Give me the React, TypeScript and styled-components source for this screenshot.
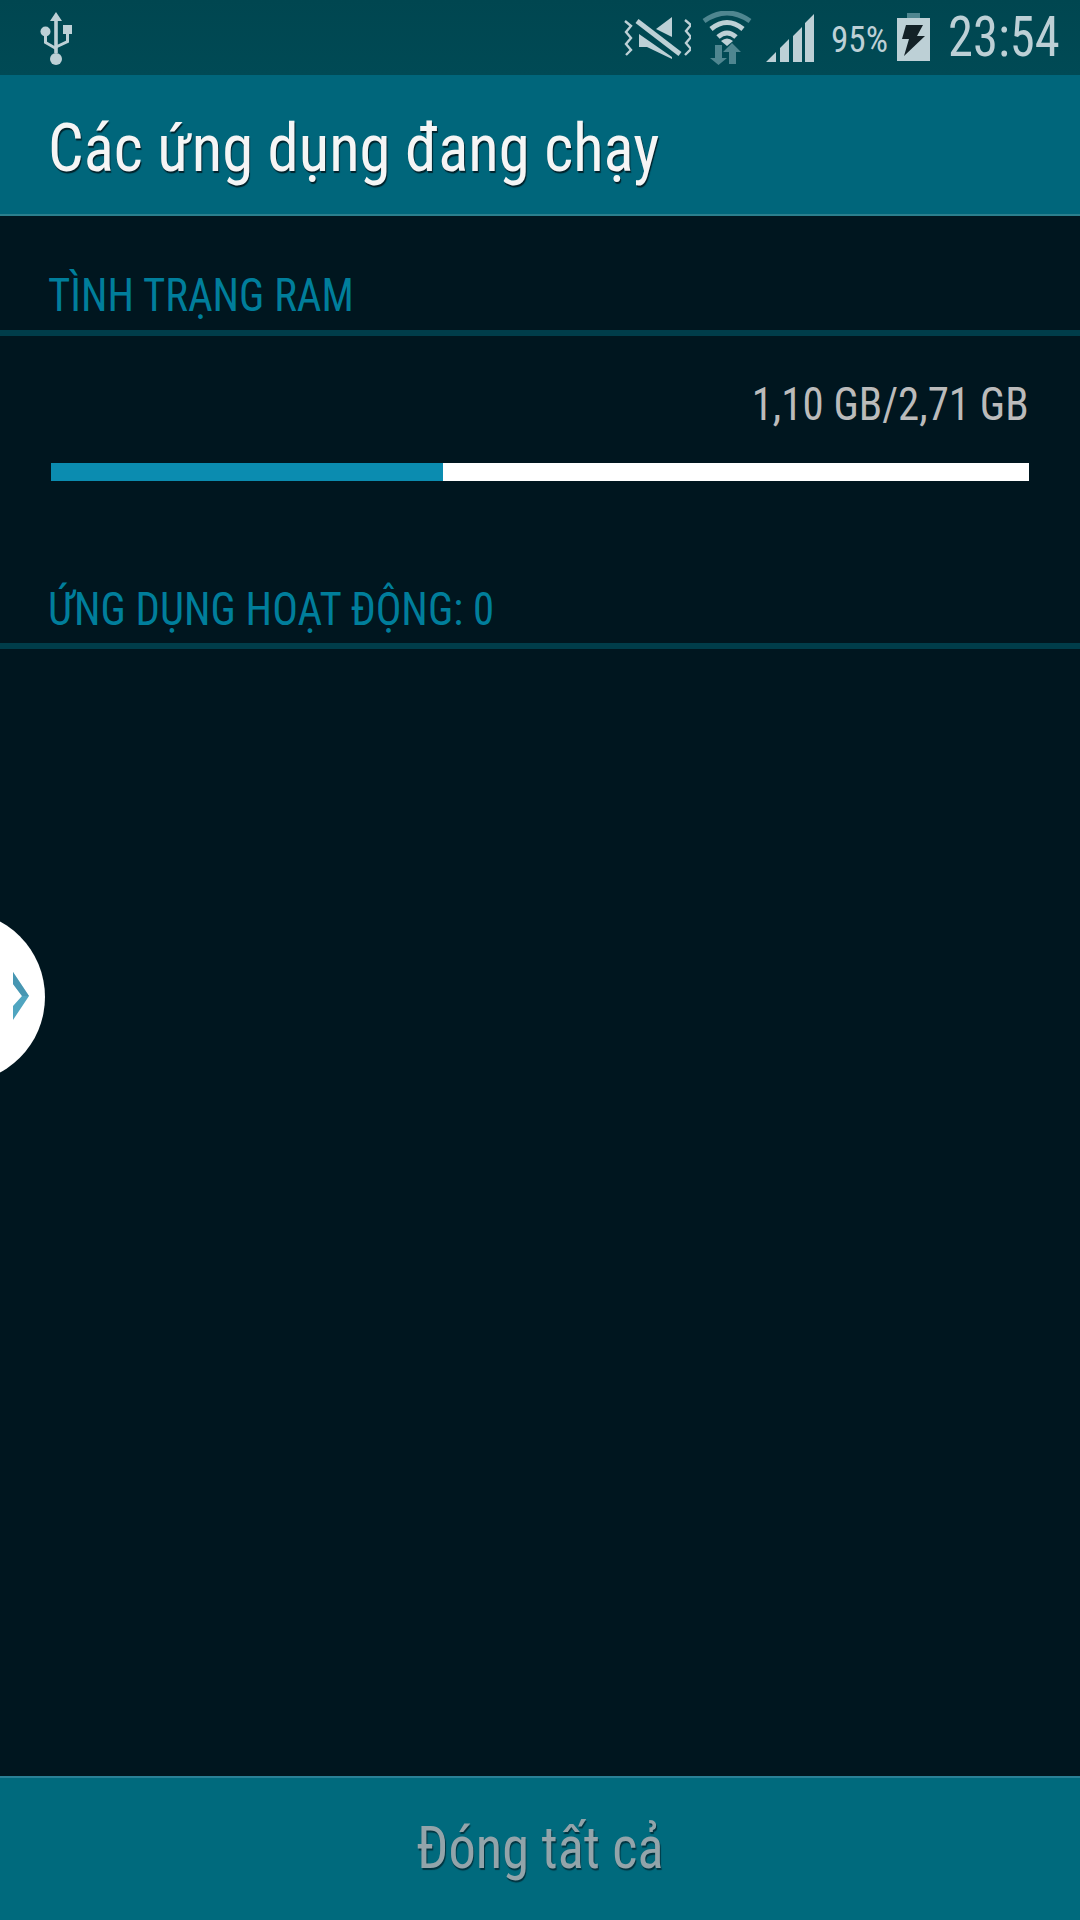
import React from "react";
import styled, { createGlobalStyle } from "styled-components";

const Global = createGlobalStyle`
  html, body { margin: 0; padding: 0; background: #00161f; }
  #root { width: 1080px; height: 1920px; }
  * { box-sizing: border-box; }
`;

const Page = styled.div`
  width: 1080px;
  height: 1920px;
  display: flex;
  flex-direction: column;
  position: relative;
  overflow: hidden;
  background: #00161f;
  font-family: Roboto, "Liberation Sans", sans-serif;
  font-stretch: 75%;
`;

const StatusBar = styled.div`
  height: 75px;
  flex: none;
  display: flex;
  align-items: flex-start;
  background: linear-gradient(#004650, #004a55);
  color: #bdd0d6;
`;

const StatusIcon = styled.svg<{ $left: number; $top: number }>`
  display: block;
  flex: none;
  margin-left: ${(p) => p.$left}px;
  margin-top: ${(p) => p.$top}px;
`;

const Spacer = styled.div`
  flex: 1;
`;

const Condensed = styled.span<{ $x: number }>`
  display: inline-block;
  white-space: nowrap;
  transform: scaleX(${(p) => p.$x});
  transform-origin: left center;
`;

const Battery = styled.div`
  flex: none;
  width: 54px;
  margin-left: 17px;
  font-size: 37px;
  line-height: 40px;
  margin-top: 20px;
`;

const Clock = styled.div`
  flex: none;
  width: 128px;
  margin-left: 18px;
  font-size: 55px;
  line-height: 60px;
  margin-top: 7px;
`;

const Header = styled.header`
  height: 141px;
  flex: none;
  background: #00667b;
  border-bottom: 2px solid #2b7f8d;
  padding: 6px 0 0 48px;
  display: flex;
  align-items: center;
  color: #f5f5f5;
  font-size: 67px;
  text-shadow: 1px 2px 1px #00222b;
`;

const Content = styled.main`
  flex: 1;
  display: flex;
  flex-direction: column;
`;

const SectionTitle = styled.h2<{ $top: number; $height: number }>`
  margin: ${(p) => p.$top}px 0 0;
  height: ${(p) => p.$height}px;
  padding: 0 0 0 48px;
  border-bottom: 6px solid #003d4a;
  color: #007e9b;
  font-size: 47px;
  font-weight: 400;
  line-height: 50px;
`;

const RamValue = styled.div`
  margin-top: 38px;
  height: 60px;
  padding-right: 51px;
  display: flex;
  justify-content: flex-end;
  color: #bbbbbb;
  font-size: 47px;
  line-height: 60px;
`;

const RightFit = styled(Condensed)`
  transform-origin: right center;
`;

const RamBar = styled.div`
  margin: 29px 51px 0;
  height: 18px;
  background: #ffffff;
  display: flex;
`;

const RamUsed = styled.div`
  background: #0b8cb0;
  height: 100%;
`;

const Handle = styled.div`
  position: absolute;
  left: -127px;
  top: 911px;
  width: 172px;
  height: 172px;
  border-radius: 50%;
  background: #ffffff;
`;

const HandleArrow = styled.svg`
  position: absolute;
  left: 140px;
  top: 61px;
`;

const Footer = styled.footer`
  height: 144px;
  flex: none;
  background: #006a7d;
  border-top: 2px solid #2a8196;
  padding-bottom: 4px;
  display: flex;
  align-items: center;
  justify-content: center;
  color: #93a4aa;
  font-size: 60px;
  text-shadow: 1px 2px 1px #003440;
`;

const Centered = styled(Condensed)`
  transform-origin: center center;
`;

const UsbIcon = () => (
  <StatusIcon $left={40} $top={12} width="32" height="53" viewBox="0 0 32 53">
    <path d="M16 0l6 9h-4.2v32h-3.600V9H10z" fill="#bdd0d6" />
    <circle cx="16" cy="47" r="6" fill="#bdd0d6" />
    <circle cx="5.500" cy="19.500" r="5" fill="#bdd0d6" />
    <rect x="23" y="13" width="9" height="9" fill="#bdd0d6" />
    <path d="M5.500 22v8.500L16 36.500M27.500 20v9.500L16 35" fill="none" stroke="#bdd0d6" strokeWidth="3" />
  </StatusIcon>
);

const MuteIcon = () => (
  <StatusIcon $left={551} $top={16} width="68" height="44" viewBox="0 0 68 44">
    <path d="M33 13L49 1v20zM16 18l33 23v2L24 31H16z" fill="#bdd0d6" />
    <path d="M14 5l43 33" stroke="#bdd0d6" strokeWidth="5" fill="none" />
    <path d="M2 5l6 5-5 6 5 6-5 6 5 6-5 5M62 4l6 5-5 6 5 6-5 6 5 6-6 6" stroke="#bdd0d6" strokeWidth="2.400" fill="none" />
  </StatusIcon>
);

const WifiIcon = () => (
  <StatusIcon $left={11} $top={11} width="50" height="54" viewBox="0 0 50 54">
    <path d="M2 10Q25-6 48 10" stroke="#4f8690" strokeWidth="5" fill="none" />
    <path d="M9 18Q25 5 41 18" stroke="#bdd0d6" strokeWidth="5" fill="none" />
    <path d="M16 26Q25 18 34 26" stroke="#bdd0d6" strokeWidth="5" fill="none" />
    <path d="M19 30Q25 25 31 30L25 35z" fill="#bdd0d6" />
    <path d="M13 34h7v13h5l-8.500 7L8 47h5zM30 32l9 9h-5v12h-7V41h-6z" fill="#4f8690" />
  </StatusIcon>
);

const SignalIcon = () => (
  <StatusIcon $left={14} $top={14} width="48" height="48" viewBox="0 0 48 48">
    <path d="M0 48L10 38v10zM14 34l9-9v23h-9zM27 22l9-9v35h-9zM39 9l9-9v48h-9z" fill="#bdd0d6" />
  </StatusIcon>
);

const BatteryIcon = () => (
  <StatusIcon $left={12} $top={13} width="33" height="48" viewBox="0 0 33 48">
    <path d="M10 0h13v5H10z" fill="#4f8690" />
    <path d="M0 5h33v43H0z" fill="#bdd0d6" />
    <path d="M9 12h17l-6 11h8L7 43l5-17H5z" fill="#132127" />
  </StatusIcon>
);

export default function App() {
  const used = 40.1;
  return (
    <Page>
      <Global />
      <StatusBar>
        <UsbIcon />
        <MuteIcon />
        <WifiIcon />
        <SignalIcon />
        <Battery>
          <Condensed $x={0.95}>95%</Condensed>
        </Battery>
        <BatteryIcon />
        <Clock>
          <Condensed $x={0.92}>23:54</Condensed>
        </Clock>
        <Spacer />
      </StatusBar>
      <Header>
        <Condensed $x={0.938}>Các ứng dụng đang chạy</Condensed>
      </Header>
      <Content>
        <SectionTitle $top={54} $height={66}>
          <Condensed $x={0.91}>TÌNH TRẠNG RAM</Condensed>
        </SectionTitle>
        <RamValue>
          <RightFit $x={0.912}>1,10 GB/2,71 GB</RightFit>
        </RamValue>
        <RamBar>
          <RamUsed style={{ width: `${used}%` }} />
        </RamBar>
        <SectionTitle $top={103} $height={65}>
          <Condensed $x={0.91}>ỨNG DỤNG HOẠT ĐỘNG: 0</Condensed>
        </SectionTitle>
      </Content>
      <Footer>
        <Centered $x={0.908}>Đóng tất cả</Centered>
      </Footer>
      <Handle>
        <HandleArrow width="16" height="48" viewBox="0 0 16 48">
          <path d="M0 0L16 24L0 48V34L9 24L0 12z" fill="#50a5c0" />
          <path d="M0 0L16 24L9 24L0 12z" fill="#3f8aa5" opacity="0.55" />
        </HandleArrow>
      </Handle>
    </Page>
  );
}
